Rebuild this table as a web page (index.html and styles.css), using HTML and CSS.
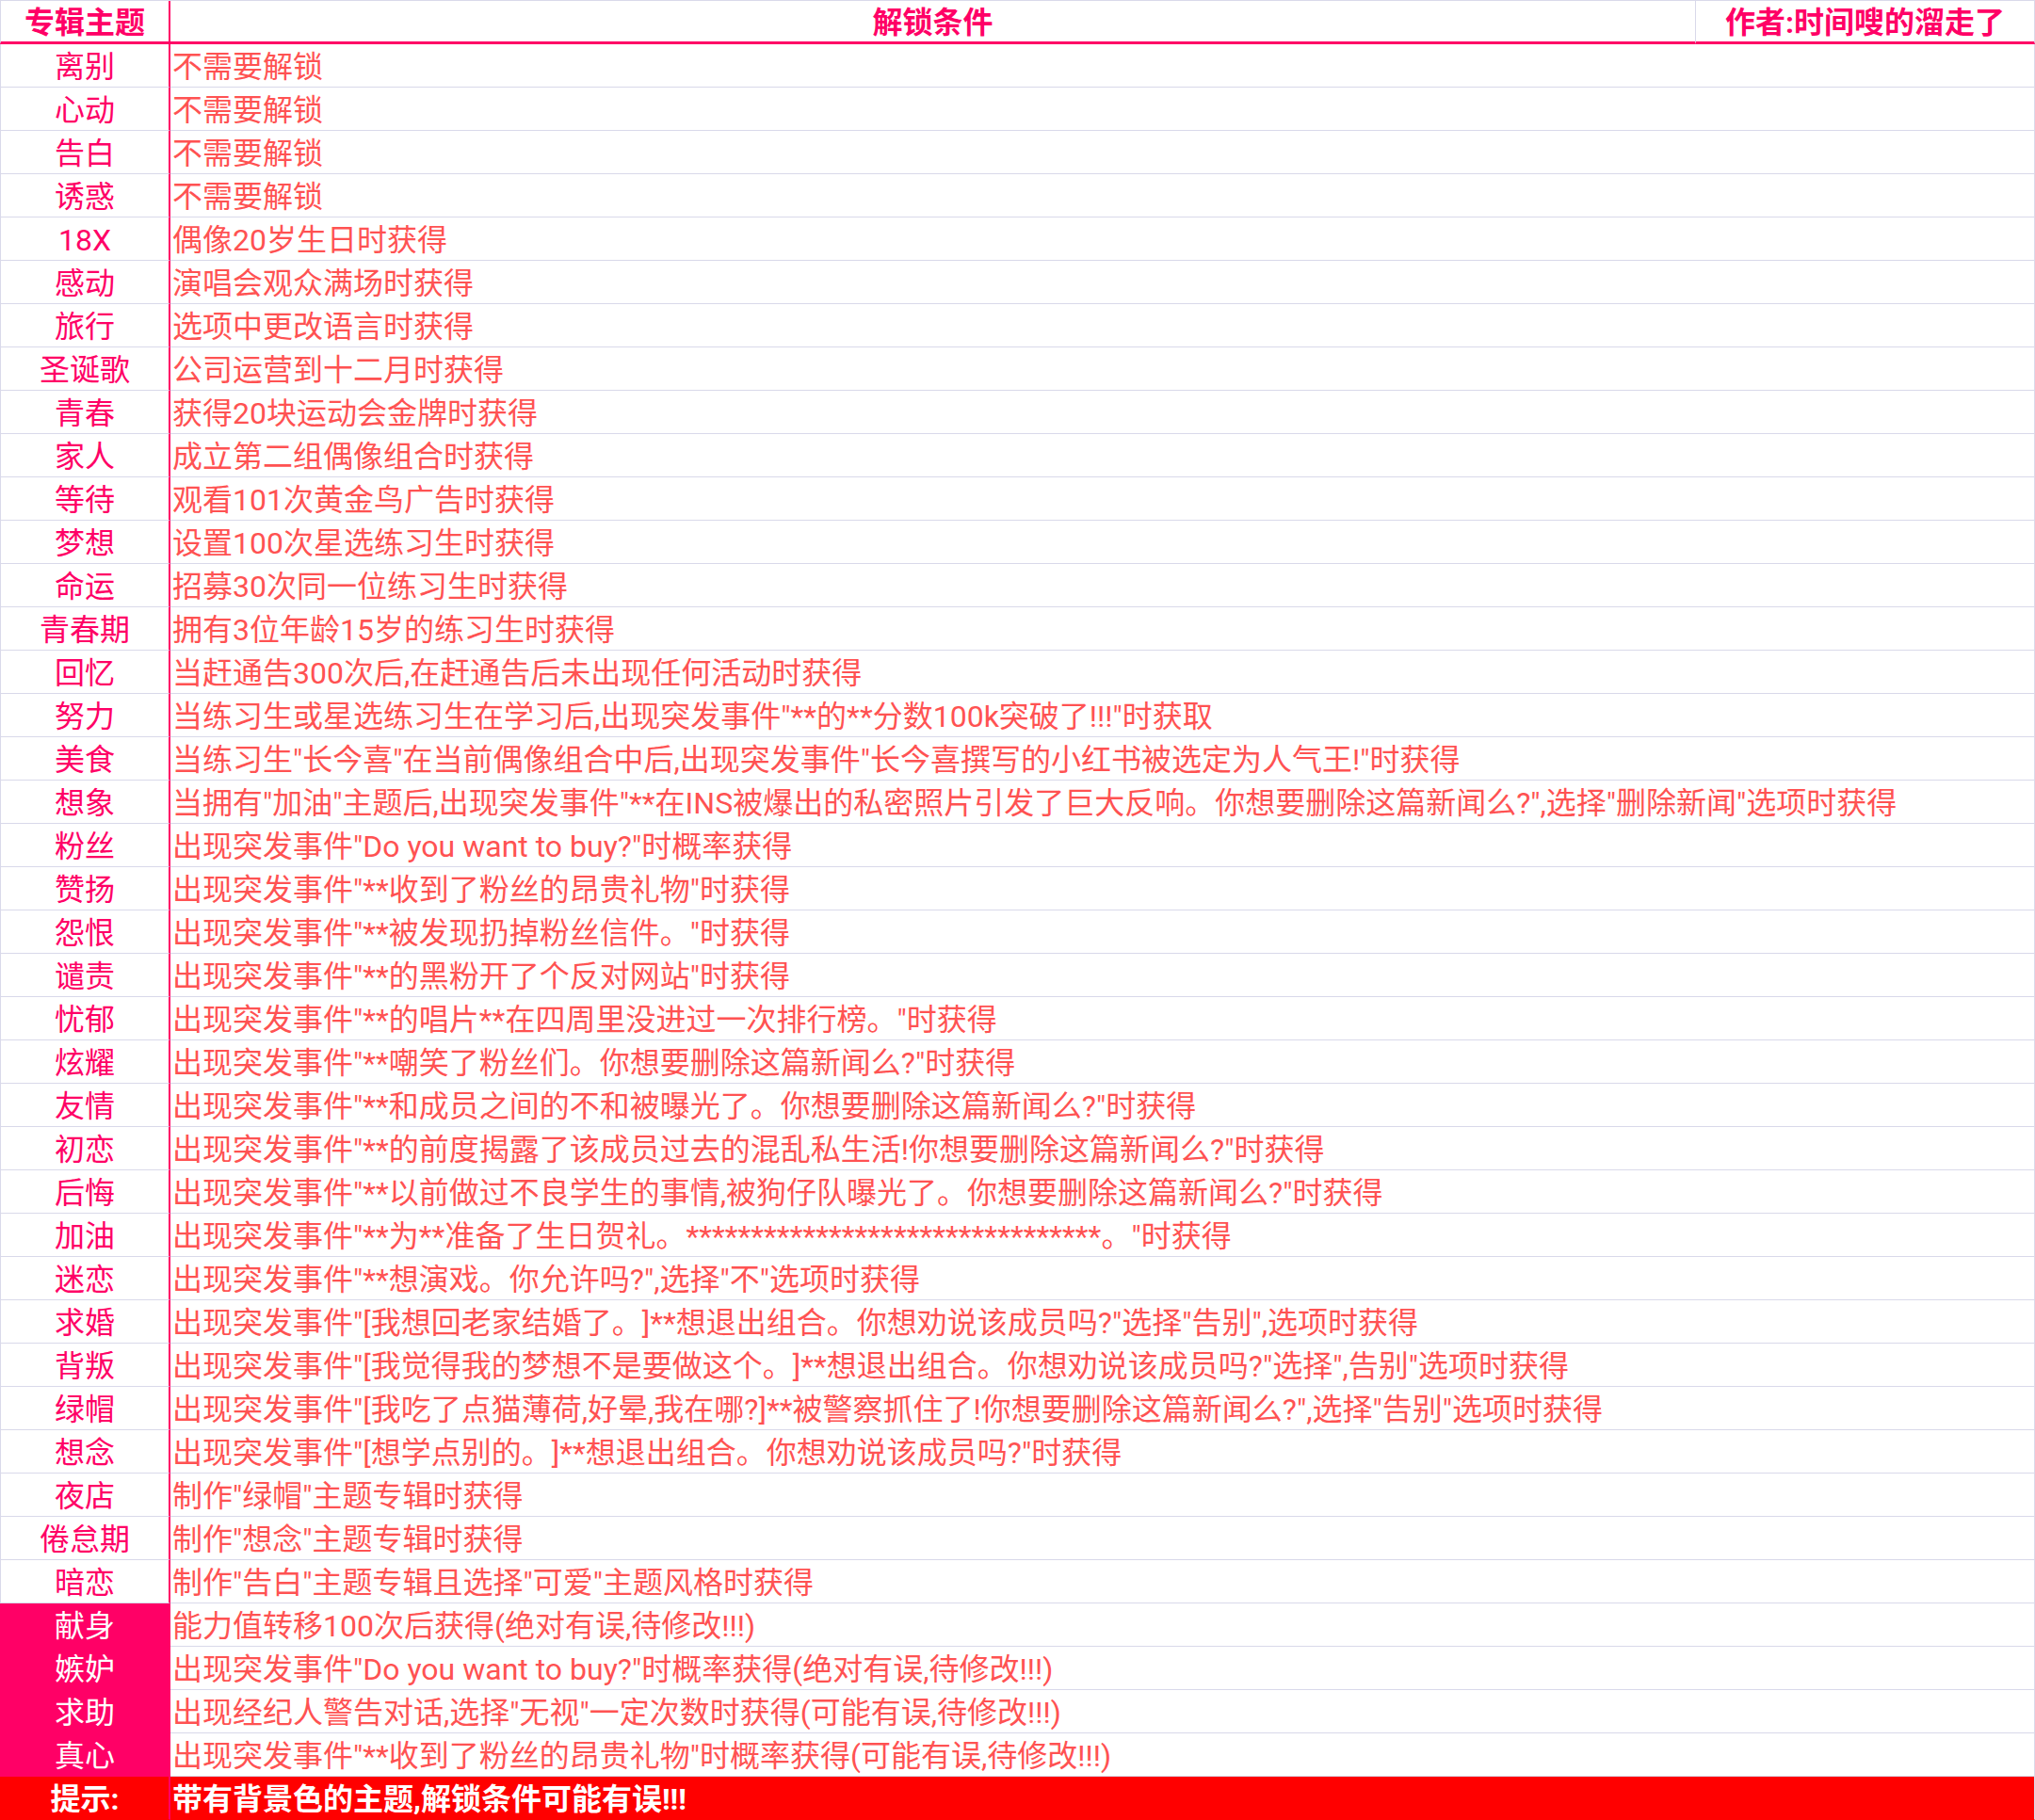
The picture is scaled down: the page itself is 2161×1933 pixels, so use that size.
FILE: index.html
```html
<!DOCTYPE html>
<html lang="zh-CN">
<head>
<meta charset="utf-8">
<title>专辑主题解锁条件</title>
<link rel="stylesheet" href="styles.css">
</head>
<body>
<div class="sheet">
  <div class="row head">
    <div class="c1">专辑主题</div>
    <div class="c2">解锁条件</div>
    <div class="c3">作者:时间嗖的溜走了</div>
  </div>
  <div class="row"><div class="c1">离别</div><div class="cond">不需要解锁</div></div>
  <div class="row"><div class="c1">心动</div><div class="cond">不需要解锁</div></div>
  <div class="row"><div class="c1">告白</div><div class="cond">不需要解锁</div></div>
  <div class="row"><div class="c1">诱惑</div><div class="cond">不需要解锁</div></div>
  <div class="row"><div class="c1">18X</div><div class="cond">偶像20岁生日时获得</div></div>
  <div class="row"><div class="c1">感动</div><div class="cond">演唱会观众满场时获得</div></div>
  <div class="row"><div class="c1">旅行</div><div class="cond">选项中更改语言时获得</div></div>
  <div class="row"><div class="c1">圣诞歌</div><div class="cond">公司运营到十二月时获得</div></div>
  <div class="row"><div class="c1">青春</div><div class="cond">获得20块运动会金牌时获得</div></div>
  <div class="row"><div class="c1">家人</div><div class="cond">成立第二组偶像组合时获得</div></div>
  <div class="row"><div class="c1">等待</div><div class="cond">观看101次黄金鸟广告时获得</div></div>
  <div class="row"><div class="c1">梦想</div><div class="cond">设置100次星选练习生时获得</div></div>
  <div class="row"><div class="c1">命运</div><div class="cond">招募30次同一位练习生时获得</div></div>
  <div class="row"><div class="c1">青春期</div><div class="cond">拥有3位年龄15岁的练习生时获得</div></div>
  <div class="row"><div class="c1">回忆</div><div class="cond">当赶通告300次后,在赶通告后未出现任何活动时获得</div></div>
  <div class="row"><div class="c1">努力</div><div class="cond">当练习生或星选练习生在学习后,出现突发事件"**的**分数100k突破了!!!"时获取</div></div>
  <div class="row"><div class="c1">美食</div><div class="cond">当练习生"长今喜"在当前偶像组合中后,出现突发事件"长今喜撰写的小红书被选定为人气王!"时获得</div></div>
  <div class="row"><div class="c1">想象</div><div class="cond">当拥有"加油"主题后,出现突发事件"**在INS被爆出的私密照片引发了巨大反响。你想要删除这篇新闻么?",选择"删除新闻"选项时获得</div></div>
  <div class="row"><div class="c1">粉丝</div><div class="cond">出现突发事件"Do you want to buy?"时概率获得</div></div>
  <div class="row"><div class="c1">赞扬</div><div class="cond">出现突发事件"**收到了粉丝的昂贵礼物"时获得</div></div>
  <div class="row"><div class="c1">怨恨</div><div class="cond">出现突发事件"**被发现扔掉粉丝信件。"时获得</div></div>
  <div class="row"><div class="c1">谴责</div><div class="cond">出现突发事件"**的黑粉开了个反对网站"时获得</div></div>
  <div class="row"><div class="c1">忧郁</div><div class="cond">出现突发事件"**的唱片**在四周里没进过一次排行榜。"时获得</div></div>
  <div class="row"><div class="c1">炫耀</div><div class="cond">出现突发事件"**嘲笑了粉丝们。你想要删除这篇新闻么?"时获得</div></div>
  <div class="row"><div class="c1">友情</div><div class="cond">出现突发事件"**和成员之间的不和被曝光了。你想要删除这篇新闻么?"时获得</div></div>
  <div class="row"><div class="c1">初恋</div><div class="cond">出现突发事件"**的前度揭露了该成员过去的混乱私生活!你想要删除这篇新闻么?"时获得</div></div>
  <div class="row"><div class="c1">后悔</div><div class="cond">出现突发事件"**以前做过不良学生的事情,被狗仔队曝光了。你想要删除这篇新闻么?"时获得</div></div>
  <div class="row"><div class="c1">加油</div><div class="cond">出现突发事件"**为**准备了生日贺礼。********************************。"时获得</div></div>
  <div class="row"><div class="c1">迷恋</div><div class="cond">出现突发事件"**想演戏。你允许吗?",选择"不"选项时获得</div></div>
  <div class="row"><div class="c1">求婚</div><div class="cond">出现突发事件"[我想回老家结婚了。]**想退出组合。你想劝说该成员吗?"选择"告别",选项时获得</div></div>
  <div class="row"><div class="c1">背叛</div><div class="cond">出现突发事件"[我觉得我的梦想不是要做这个。]**想退出组合。你想劝说该成员吗?"选择",告别"选项时获得</div></div>
  <div class="row"><div class="c1">绿帽</div><div class="cond">出现突发事件"[我吃了点猫薄荷,好晕,我在哪?]**被警察抓住了!你想要删除这篇新闻么?",选择"告别"选项时获得</div></div>
  <div class="row"><div class="c1">想念</div><div class="cond">出现突发事件"[想学点别的。]**想退出组合。你想劝说该成员吗?"时获得</div></div>
  <div class="row"><div class="c1">夜店</div><div class="cond">制作"绿帽"主题专辑时获得</div></div>
  <div class="row"><div class="c1">倦怠期</div><div class="cond">制作"想念"主题专辑时获得</div></div>
  <div class="row"><div class="c1">暗恋</div><div class="cond">制作"告白"主题专辑且选择"可爱"主题风格时获得</div></div>
  <div class="row"><div class="c1 mark">献身</div><div class="cond">能力值转移100次后获得(绝对有误,待修改!!!)</div></div>
  <div class="row"><div class="c1 mark">嫉妒</div><div class="cond">出现突发事件"Do you want to buy?"时概率获得(绝对有误,待修改!!!)</div></div>
  <div class="row"><div class="c1 mark">求助</div><div class="cond">出现经纪人警告对话,选择"无视"一定次数时获得(可能有误,待修改!!!)</div></div>
  <div class="row"><div class="c1 mark">真心</div><div class="cond">出现突发事件"**收到了粉丝的昂贵礼物"时概率获得(可能有误,待修改!!!)</div></div>
  <div class="row tip"><div class="c1">提示:</div><div class="cond">带有背景色的主题,解锁条件可能有误!!!</div></div>
</div>
</body>
</html>
```

FILE: styles.css
```css
html, body {
  margin: 0;
  padding: 0;
  background: #ffffff;
}

.sheet {
  width: 2161px;
  border-top: 1px solid #d9d9ea;
  font-family: Roboto, "Noto Sans CJK SC", sans-serif;
  font-size: 32px;
  line-height: 1;
  color: #ff5252;
  text-spacing-trim: space-all;
}

.row {
  display: grid;
  grid-template-columns: 181px 1980px;
  height: 46px;
}

.row > div {
  box-sizing: border-box;
  display: flex;
  align-items: center;
  border-bottom: 1px solid #d9d9ea;
  white-space: nowrap;
  padding-top: 3px;
}

.c1 {
  justify-content: center;
  color: #ff0066;
  border-left: 1px solid #d9d9ea;
  border-right: 2px solid #ff0066;
}

.cond {
  padding-left: 2px;
  border-right: 1px solid #d9d9ea;
}

.head {
  grid-template-columns: 181px 1620px 360px;
  font-weight: bold;
  color: #ff0066;
}

.head > div {
  border-bottom: 3px solid #ff0066;
  padding-top: 2px;
}

.head .c2,
.head .c3 {
  justify-content: center;
  border-right: 1px solid #d9d9ea;
}

.c1.mark {
  background: #ff0066;
  color: #ffffff;
  border-bottom-color: #ff0066;
  border-left-color: #ff0066;
}

.tip > div {
  background: #ff0000;
  color: #ffffff;
  font-weight: bold;
  border-bottom-color: #ff0000;
}

.tip .c1 {
  border-left-color: #ff0000;
}
```
